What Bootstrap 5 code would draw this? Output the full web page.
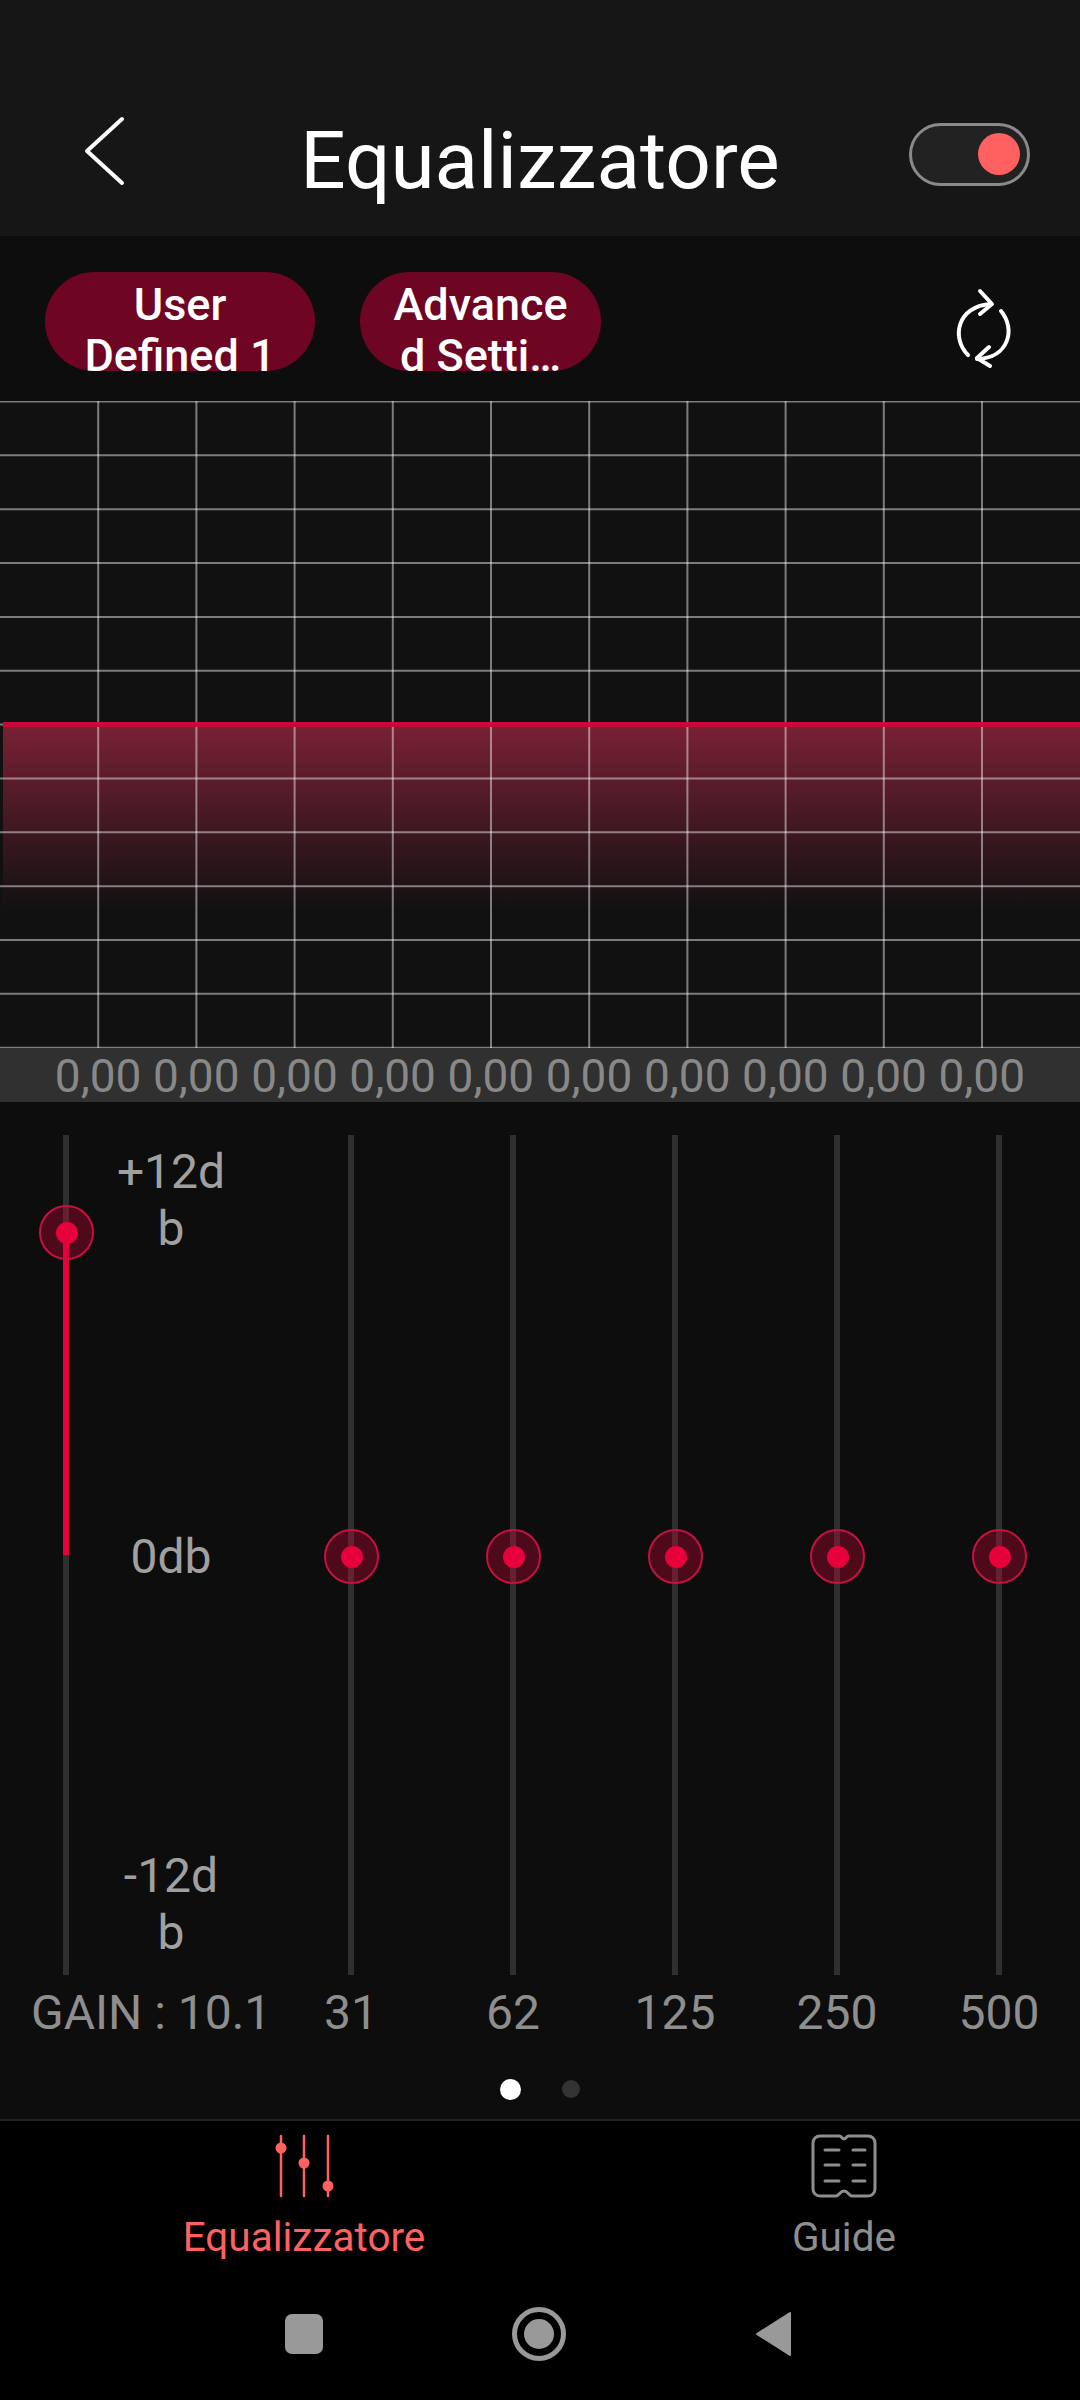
<!DOCTYPE html>
<html lang="it">
  <head>
    <meta charset="utf-8" />
    <meta name="viewport" content="width=device-width, initial-scale=1" />
    <title>Equalizzatore</title>
    <link href="https://cdn.jsdelivr.net/npm/bootstrap@5.3.2/dist/css/bootstrap.min.css" rel="stylesheet" />
    <style>
      body { background: #0d0d0d; font-family: Roboto, "Liberation Sans", sans-serif; width: 1080px; height: 2400px; overflow: hidden; }
      .app-head { height: 236px; padding-top: 60px; background: #161616; display: grid; grid-template-columns: 1fr auto 1fr; align-items: center; }
      .back-btn { padding-left: 84px; margin-top: 6px; }
      .head-title { color: #fff; font-size: 80px; line-height: 90px; margin: 26px 0 0; font-weight: 400; }
      .toggle-wrap { padding-right: 50px; margin-top: 12px; }
      .power-toggle { width: 121px; height: 63px; border: 3px solid #8a8a8a; border-radius: 32px; background: #222; padding-right: 7px; }
      .power-knob { width: 42px; height: 42px; border-radius: 50%; background: #ff6060; }
      .preset-row { height: 165px; padding: 36px 65px 30px 45px; }
      .chip-pill { height: 99px; border-radius: 50px; background: #6e0522; color: #fff; font-size: 45px; font-weight: 500; line-height: 51px; text-align: center; overflow: hidden; padding-top: 7px; white-space: nowrap; }
      .chip-a { width: 270px; margin-right: 45px; }
      .chip-b { width: 241px; }
      .chart-box { height: 647px; background: #111; }
      .chart-box svg { display: block; }
      .value-bar { height: 54px; background: #303030; color: #888; font-size: 46px; line-height: 56px; padding: 0 49px; }
      .value-bar span { width: 98.2px; text-align: center; white-space: nowrap; flex: none; }
      .eq-grid { display: grid; grid-template-columns: 132px 138px repeat(5, 162px); }
      .eq-panel { height: 1017px; padding-top: 33px; }
      .eq-slider { height: 840px; position: relative; }
      .eq-track { position: absolute; top: 0; bottom: 0; left: 50%; width: 6px; margin-left: -3px; background: #2f2f2f; }
      .eq-fill { position: absolute; left: 50%; width: 6px; margin-left: -3px; background: #e6003c; }
      .eq-thumb { position: absolute; left: 50%; width: 55px; height: 55px; margin: -27px 0 0 -27px; border-radius: 50%; border: 2px solid #c8103f; background: rgba(230, 0, 60, .3); }
      .eq-thumb::after { content: ""; position: absolute; left: 50%; top: 50%; width: 22px; height: 22px; margin: -11px 0 0 -11px; border-radius: 50%; background: #e6003c; }
      .db-col { height: 840px; padding: 8px 60px 14px 0; color: #a0a0a0; font-size: 48px; line-height: 57px; text-align: center; white-space: nowrap; }
      .freq-row { color: #8e8e8e; font-size: 48px; line-height: 56px; margin-top: 10px; text-align: center; white-space: nowrap; }
      .gain-label { grid-column: span 2; text-align: left; padding-left: 31px; }
      .page-dots { height: 40px; margin-top: 28px; gap: 41px; }
      .dot-on { width: 21px; height: 21px; border-radius: 50%; background: #fff; }
      .dot-off { width: 18px; height: 18px; border-radius: 50%; background: #333; }
      .tab-bar { height: 281px; background: #000; border-top: 2px solid #222; }
      .tab-row { padding: 12px 0 0 68px; gap: 140px; }
      .tab-item { width: 400px; font-size: 40.5px; line-height: 48px; color: #8e8e8e; }
      .tab-item svg { display: block; margin-bottom: 14px; }
      .tab-on { color: #ff6060; }
      .sys-nav { padding: 46px 4px 0 0; gap: 189px; }
    </style>
  </head>
  <body>
    <header class="app-head">
      <div class="back-btn">
        <svg width="42" height="70" viewBox="0 0 42 70"><path d="M38 3 3 35l0 0 35 32" fill="none" stroke="#fff" stroke-width="4" stroke-linecap="round" stroke-linejoin="round"/></svg>
      </div>
      <h1 class="head-title">Equalizzatore</h1>
      <div class="toggle-wrap d-flex justify-content-end">
        <div class="power-toggle d-flex align-items-center justify-content-end"><div class="power-knob"></div></div>
      </div>
    </header>

    <section class="preset-row d-flex">
      <div class="chip-pill chip-a">User<br />Defined 1</div>
      <div class="chip-pill chip-b">Advance<br />d Setti…</div>
      <div class="ms-auto pt-2 mt-2">
        <svg width="60" height="80" viewBox="0 0 60 80" fill="none" stroke="#fff" stroke-width="4" stroke-linecap="round" stroke-linejoin="round">
          <path d="M13 67C-4 50 2 18 36 16"/>
          <path d="M25 3l12 13-12 10"/>
          <path d="M46 23c15 18 8 47-24 48"/>
          <path d="M34 59 22 70l13 8"/>
        </svg>
      </div>
    </section>

    <section class="chart-box">
      <svg id="chart" width="1080" height="647" viewBox="0 0 1080 647">
        <defs>
          <linearGradient id="fillGrad" x1="0" y1="0" x2="0" y2="1">
            <stop offset="0" stop-color="#fa3461" stop-opacity=".45"/>
            <stop offset="1" stop-color="#fa3461" stop-opacity="0"/>
          </linearGradient>
        </defs>
      </svg>
    </section>

    <div class="value-bar d-flex" id="values"></div>

    <main class="eq-panel">
      <div class="eq-grid">
        <div class="eq-slider">
          <div class="eq-track"></div>
          <div class="eq-fill" style="top:97px;height:323px"></div>
          <div class="eq-thumb" style="top:97px"></div>
        </div>
        <div class="db-col d-flex flex-column justify-content-between align-items-center">
          <div>+12d<br />b</div>
          <div class="mt-2">0db</div>
          <div>-12d<br />b</div>
        </div>
        <div class="eq-slider"><div class="eq-track"></div><div class="eq-thumb" style="top:421px"></div></div>
        <div class="eq-slider"><div class="eq-track"></div><div class="eq-thumb" style="top:421px"></div></div>
        <div class="eq-slider"><div class="eq-track"></div><div class="eq-thumb" style="top:421px"></div></div>
        <div class="eq-slider"><div class="eq-track"></div><div class="eq-thumb" style="top:421px"></div></div>
        <div class="eq-slider"><div class="eq-track"></div><div class="eq-thumb" style="top:421px"></div></div>
      </div>
      <div class="eq-grid freq-row">
        <div class="gain-label">GAIN : 10.1</div>
        <div>31</div><div>62</div><div>125</div><div>250</div><div>500</div>
      </div>
      <div class="page-dots d-flex justify-content-center align-items-center">
        <div class="dot-on"></div>
        <div class="dot-off"></div>
      </div>
    </main>

    <footer class="tab-bar">
      <div class="tab-row d-flex justify-content-center">
        <div class="tab-item tab-on d-flex flex-column align-items-center">
          <svg width="70" height="66" viewBox="0 0 70 66" fill="#ff6060">
            <path d="M12 3v60M35 3v60M59 3v60" stroke="#ff6060" stroke-width="2.5" stroke-linecap="round" fill="none"/>
            <circle cx="12" cy="15" r="5.5"/><circle cx="35" cy="30" r="5.5"/><circle cx="59" cy="53" r="5.5"/>
          </svg>
          Equalizzatore
        </div>
        <div class="tab-item d-flex flex-column align-items-center">
          <svg width="70" height="66" viewBox="0 0 70 66" fill="none" stroke="#8e8e8e" stroke-width="3" stroke-linecap="round" stroke-linejoin="round">
            <path d="M11 3h19c3 0 3 3 5 3s2-3 5-3h19c4 0 7 3 7 7v46c0 4-3 7-7 7H43c-3 0-4-5-8-5s-5 5-8 5H11c-4 0-7-3-7-7V10c0-4 3-7 7-7z"/>
            <path d="M16 17h14M44 17h12M16 32h14M44 32h12M16 48h14M44 48h12"/>
          </svg>
          Guide
        </div>
      </div>
      <div class="sys-nav d-flex justify-content-center align-items-center">
        <svg width="38" height="40" viewBox="0 0 38 40"><rect width="38" height="40" rx="7" fill="#999"/></svg>
        <svg width="54" height="54" viewBox="0 0 54 54"><circle cx="27" cy="27" r="24.5" fill="none" stroke="#999" stroke-width="5"/><circle cx="27" cy="27" r="15" fill="#999"/></svg>
        <svg width="37" height="46" viewBox="0 0 37 46"><path d="M35 2 2 23l33 21z" fill="#999" stroke="#999" stroke-width="2" stroke-linejoin="round"/></svg>
      </div>
    </footer>

    <script>
      // grid lines and the curve of the chart
      const NS = "http://www.w3.org/2000/svg";
      const chart = document.getElementById("chart");

      function add(tag, attrs) {
        const el = document.createElementNS(NS, tag);
        Object.keys(attrs).forEach(k => el.setAttribute(k, attrs[k]));
        chart.appendChild(el);
      }

      add("rect", { x: 3, y: 323, width: 1077, height: 186, fill: "url(#fillGrad)" });
      for (let i = 0; i <= 12; i++) {
        const y = i * 53.85 + 0.5;
        add("line", { x1: 0, x2: 1080, y1: y, y2: y, stroke: "#fff", "stroke-opacity": ".45", "stroke-width": 2 });
      }
      for (let i = 1; i <= 10; i++) {
        const x = i * 98.2;
        add("line", { x1: x, x2: x, y1: 0, y2: 647, stroke: "#fff", "stroke-opacity": ".45", "stroke-width": 2 });
      }
      add("rect", { x: 3, y: 321, width: 1077, height: 5, fill: "#c8073a" });

      const values = document.getElementById("values");
      for (let i = 0; i < 10; i++) {
        const s = document.createElement("span");
        s.textContent = "0,00";
        values.appendChild(s);
      }
    </script>
    <script src="https://cdn.jsdelivr.net/npm/bootstrap@5.3.2/dist/js/bootstrap.bundle.min.js"></script>
  </body>
</html>
